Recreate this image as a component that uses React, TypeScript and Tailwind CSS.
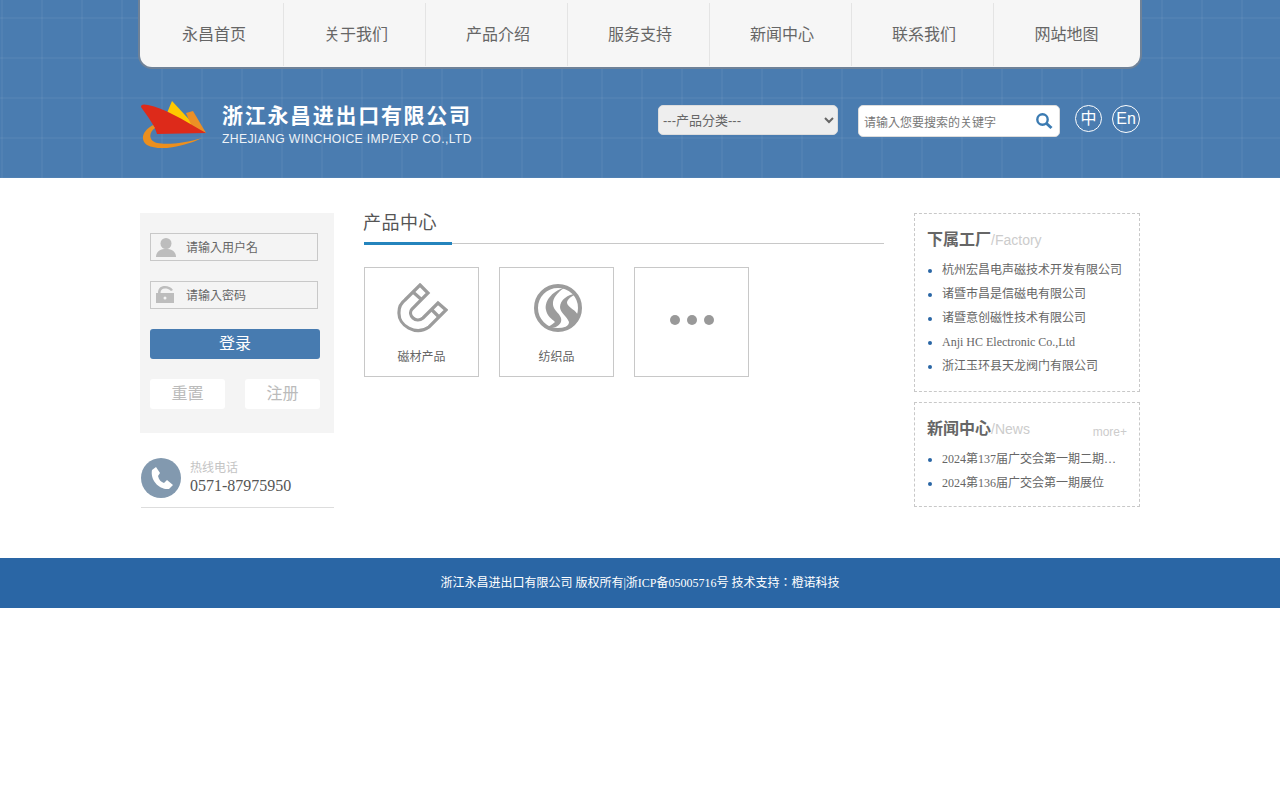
const navItems = ['永昌首页', '关于我们', '产品介绍', '服务支持', '新闻中心', '联系我们', '网站地图'];
const factories = ['杭州宏昌电声磁技术开发有限公司', '诸暨市昌是信磁电有限公司', '诸暨意创磁性技术有限公司', 'Anji HC Electronic Co.,Ltd', '浙江玉环县天龙阀门有限公司'];
const news = ['2024第137届广交会第一期二期展位', '2024第136届广交会第一期展位'];

function Logo() {
  return (
    <svg width="66" height="50" viewBox="0 0 66 50">
      <path d="M27 13 L32 1 L57 28 L43 28 Z" fill="#ffc800" />
      <path d="M46 13 L53 11 L66 33 L52 27 Z" fill="#ec8f25" />
      <path d="M1 7 C1 4 4 4 8 5 C24 8 42 19 66 33 L17 34 C15 26 8 17 1 7 Z" fill="#dd2a1a" />
      <path d="M13 25 C2 31 0 40 7 45 C20 52 46 46 62 38 C46 43 27 45 17 43 C9 41 8 33 15 28 Z" fill="#ec8f1e" />
    </svg>
  );
}

function Magnet() {
  return (
    <svg width="52" height="50" viewBox="0 0 52 50" fill="none" stroke="#9c9c9c" strokeWidth="3.2">
      <path d="M24 2 L32 10 L16 26 C11 32 20 41 27 35 L42 20 L50 27 L33 44 C20 53 2 43 3 29 C3 24 5 20 9 17 Z" />
      <path d="M17 9 L26 17 M35 26 L43 34" />
    </svg>
  );
}

function Textile() {
  return (
    <svg width="48" height="48" viewBox="0 0 48 48">
      <circle cx="24" cy="24" r="22" fill="none" stroke="#9c9c9c" strokeWidth="4" />
      <path d="M32 3 C20 6 10 16 12 26 C13 32 18 35 21 38 C18 41 14 43 11 43 C20 46 29 41 27 34 C25 28 18 26 19 18 C20 12 26 6 32 3Z" fill="#9c9c9c" />
      <path d="M42 10 C34 10 26 16 26 23 C26 29 33 32 35 38 C35 41 31 45 27 46 C36 46 44 40 44 32 C43 26 34 24 33 19 C33 15 38 12 42 10Z" fill="#9c9c9c" />
    </svg>
  );
}

export default function App() {
  return (
    <div className="min-h-[800px] bg-white font-['Liberation_Serif','Noto_Sans_CJK_JP',serif]">
      <header className="h-[178px] bg-[#4a7cb0] bg-[linear-gradient(#ffffff0a_2px,transparent_2px),linear-gradient(90deg,#ffffff0a_2px,transparent_2px)] bg-[size:40px_40px] bg-[position:1px_17px]">
        <div className="w-[1000px] mx-auto">
          <nav className="flex -mx-0.5 pl-0.5 h-[69px] rounded-b-[14px] border-2 border-t-0 border-[#6f8298] bg-[#f6f6f6]">
            {navItems.map((item, i) => (
              <a key={item} className={`w-[142px] pl-[3px] flex items-center justify-center mt-[3px] mb-px text-base text-[#666] font-['Liberation_Sans','Noto_Sans_CJK_JP',sans-serif] ${i < 6 ? 'border-r border-[#e4e4e4]' : ''}`}>
                {item}
              </a>
            ))}
          </nav>
          <div className="flex items-start mt-[31px]">
            <div className="flex items-center w-[518px]">
              <Logo />
              <div className="ml-4 font-['Liberation_Sans','Noto_Sans_CJK_JP',sans-serif] text-white">
                <div className="text-[21px] leading-[24px] font-bold tracking-[1.7px] whitespace-nowrap">浙江永昌进出口有限公司</div>
                <div className="mt-[3px] text-[12.2px] leading-[16px] tracking-[0.35px] whitespace-nowrap opacity-90">ZHEJIANG WINCHOICE IMP/EXP CO.,LTD</div>
              </div>
            </div>
            <select defaultValue="" className="mt-[5px] w-[180px] h-[30px] rounded-[5px] bg-[#eeeeee] border border-[#ddd] text-[13px] text-[#666] font-['Liberation_Sans','Noto_Sans_CJK_JP',sans-serif]">
              <option value="">---产品分类---</option>
            </select>
            <div className="mt-[5px] ml-5 w-[202px] h-8 rounded-[5px] bg-white border border-[#ddd] flex items-center justify-between pl-[5px] pr-1.5">
              <input placeholder="请输入您要搜索的关键字" className="w-[170px] pt-1 text-xs outline-none placeholder:text-[#777] font-['Liberation_Sans','Noto_Sans_CJK_JP',sans-serif]" />
              <svg width="18" height="18" viewBox="0 0 18 18" fill="none" stroke="#3b7bb2"><circle cx="7.5" cy="7.5" r="5.2" strokeWidth="2.4" /><path d="M11.5 11.5 L16.5 16" strokeWidth="3" /></svg>
            </div>
            <div className="mt-[5px] ml-[15px] flex gap-[10px] text-white font-['Liberation_Sans','Noto_Sans_CJK_JP',sans-serif]">
              <span className="w-[27px] h-[27px] rounded-full border-[1.5px] border-white flex items-center justify-center text-[16px]">中</span>
              <span className="w-[28px] h-[28px] rounded-full border-[1.5px] border-white flex items-center justify-center text-[16px]">En</span>
            </div>
          </div>
        </div>
      </header>

      <main className="w-[1000px] mx-auto flex items-start pt-[35px] h-[380px]">
        <aside className="w-[194px] shrink-0">
          <div className="h-[220px] bg-[#f4f4f4] px-2.5 pt-5">
            <div className="w-[168px] h-7 border border-[#c8c8c8] flex items-center pl-[5px]">
              <svg width="20" height="20" viewBox="0 0 20 20" fill="#bdbdbd" className="shrink-0"><circle cx="10" cy="6.5" r="5.5" /><path d="M0 20 C0 14 5 12 10 12 C15 12 20 14 20 20 Z" /></svg>
              <input placeholder="请输入用户名" className="ml-2.5 w-[125px] pt-px text-xs bg-transparent outline-none placeholder:text-[#666]" />
            </div>
            <div className="mt-5 w-[168px] h-7 border border-[#c8c8c8] flex items-center pl-[5px]">
              <svg width="20" height="20" viewBox="0 0 20 20" fill="#bdbdbd" className="shrink-0"><path d="M2 8 C2 2 6 1 9 1 C12 1 15 2 17 5 L15 6 C13 4 11 3.5 9 3.5 C6 3.5 4.5 5 4.5 8 Z" /><path d="M0 8 H18 V18 H0 Z" /><circle cx="9" cy="13" r="1.5" fill="#f4f4f4" /></svg>
              <input placeholder="请输入密码" className="ml-2.5 w-[125px] pt-px text-xs bg-transparent outline-none placeholder:text-[#666]" />
            </div>
            <button className="block mt-5 w-[170px] h-[30px] rounded-[3px] bg-[#477bb0] text-white text-base">登录</button>
            <div className="mt-5 flex justify-between w-[170px]">
              <button className="w-[75px] h-[30px] rounded-[3px] bg-white text-[#bbb] text-base">重置</button>
              <button className="w-[75px] h-[30px] rounded-[3px] bg-white text-[#bbb] text-base">注册</button>
            </div>
          </div>
          <div className="mt-[25px] ml-px h-[50px] border-b border-[#ddd] flex items-start">
            <span className="w-10 h-10 rounded-full bg-[#8299af] flex items-center justify-center">
              <svg width="40" height="40" viewBox="0 0 40 40" fill="#fff"><path d="M11 12 L15 9 L19 15 L17 18 C18 22 20 24 23 25 L26 22 L32 27 L28 31 C18 32 9 22 11 12Z" /></svg>
            </span>
            <div className="ml-[9px] mt-0.5">
              <div className="text-xs leading-4 text-[#c4c4c4]">热线电话</div>
              <div className="text-base leading-5 text-[#555]">0571-87975950</div>
            </div>
          </div>
        </aside>

        <section className="w-[520px] ml-[30px] shrink-0">
          <div className="h-[31px] border-b border-[#c8c8c8] relative">
            <h2 className="text-lg leading-[20px] text-[#555] -ml-px tracking-[0.5px]">产品中心</h2>
            <span className="absolute left-0 -bottom-[2px] w-[88px] h-[3px] bg-[#2484bd]" />
          </div>
          <div className="flex gap-5 mt-[23px]">
            <div className="w-[115px] h-[110px] border border-[#c8c8c8] flex flex-col items-center pt-[15px]">
              <div className="h-[50px] flex items-center justify-center"><Magnet /></div>
              <div className="mt-4 text-xs text-[#666]">磁材产品</div>
            </div>
            <div className="w-[115px] h-[110px] border border-[#c8c8c8] flex flex-col items-center pt-[15px]">
              <div className="h-[50px] flex items-center justify-center pl-0.5"><Textile /></div>
              <div className="mt-4 text-xs text-[#666]">纺织品</div>
            </div>
            <div className="w-[115px] h-[110px] border border-[#c8c8c8] flex items-center justify-center gap-[7px] pb-1">
              <span className="w-2.5 h-2.5 rounded-full bg-[#999]" />
              <span className="w-2.5 h-2.5 rounded-full bg-[#999]" />
              <span className="w-2.5 h-2.5 rounded-full bg-[#999]" />
            </div>
          </div>
        </section>

        <aside className="w-[226px] ml-[30px] shrink-0">
          <div className="h-[179px] border border-dashed border-[#c8c8c8] px-3 pt-4">
            <h3 className="text-base leading-[20px] font-['Liberation_Sans','Noto_Sans_CJK_JP',sans-serif] font-bold text-[#666]">
              下属工厂<span className="text-sm font-normal text-[#ccc]">/Factory</span>
            </h3>
            <ul className="mt-2 pl-[15px] list-disc marker:text-[#2a66a5] text-xs leading-6 text-[#666]">
              {factories.map(f => <li key={f}>{f}</li>)}
            </ul>
          </div>
          <div className="mt-2.5 h-[105px] border border-dashed border-[#c8c8c8] px-3 pt-4">
            <div className="flex justify-between">
              <h3 className="text-base leading-[20px] font-['Liberation_Sans','Noto_Sans_CJK_JP',sans-serif] font-bold text-[#666]">
                新闻中心<span className="text-sm font-normal text-[#ccc]">/News</span>
              </h3>
              <span className="mt-[3px] text-xs leading-5 text-[#ccc] font-['Liberation_Sans',sans-serif]">more+</span>
            </div>
            <ul className="mt-[5px] pl-[15px] list-disc marker:text-[#2a66a5] text-xs leading-6 text-[#666]">
              {news.map(n => <li key={n}><span className="block truncate w-[175px]">{n}</span></li>)}
            </ul>
          </div>
        </aside>
      </main>

      <footer className="h-[50px] bg-[#2a66a5] flex items-center justify-center text-xs text-white">
        浙江永昌进出口有限公司 版权所有|浙ICP备05005716号 技术支持：橙诺科技
      </footer>
    </div>
  );
}
